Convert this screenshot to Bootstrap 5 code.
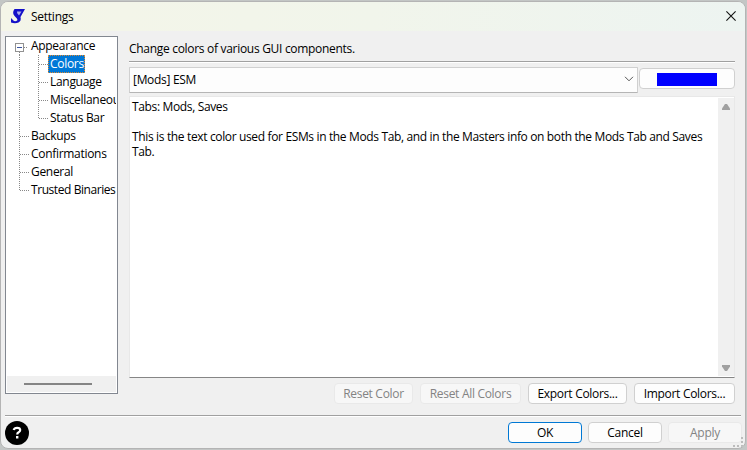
<!DOCTYPE html>
<html lang="en">
<head>
<meta charset="utf-8">
<title>Settings</title>
<link href="https://cdn.jsdelivr.net/npm/bootstrap@5.3.0/dist/css/bootstrap.min.css" rel="stylesheet">
<style>
body{width:747px;height:450px;overflow:hidden;background:#c3c6c5;font:12px/15px "Open Sans","Noto Sans",sans-serif;letter-spacing:-.3px;color:#000;padding:1px 1px 1px 0}
.dialog{height:448px;background:#f0f0f0;border:1px solid #b4b4b4;border-radius:8px;overflow:hidden;position:relative}
.titlebar{height:29px;padding:0 9px 1px 9px;background:linear-gradient(90deg,#f4f5e8,#f1f5eb 50%,#edf4f1)}
.titlebar .caption{margin-left:6px;letter-spacing:-.25px}
.upper{height:384px;padding:5px 10px 0 4px}
.tree{width:113px;height:358px;border:1px solid #828790;background:#fff;padding:0 1px 1px;overflow:hidden;flex:none}
.tree-rows{height:339px;overflow:hidden}
.node{height:18px;white-space:nowrap;line-height:18px}
.node svg{flex:none;shape-rendering:crispEdges}
.node span{padding:0 1px 0 2px}
.node .snug{letter-spacing:-.43px}
.node .picked{background:#0078d7;color:#fff;outline:1px dotted #e08a30;outline-offset:-1px}
.hbar{height:16px;background:#f0f0f0;padding:7px 0 0 17px}
.hbar div{width:68px;height:2px;background:#858585}
.main{margin-left:11px;width:606px}
.rule{height:2px;border-top:1px solid #a0a0a0;background:#fff}
.combo{width:509px;height:26px;background:#fdfdfd;border:1px solid #d0d0d0;border-bottom-color:#b5b5b5;padding:0 3px 2px;border-radius:1px}
.swatch{width:96px;height:23px;margin:1px 0 0 1px}
.swatch div{width:60px;height:13px;background:#00f;margin-top:1px}
.memo{height:282px;background:#fff;border:1px solid #e8e8e8;border-bottom:1px solid #868686;margin-top:3px}
.memo-text{padding:2px 0 0 2px;white-space:nowrap;letter-spacing:-.353px}
.vbar{width:16px;height:278px;margin:1px 0 0;background:#f0f0f0;padding:6px 0 5px}
.push{height:21px;padding:0;font-size:12px;line-height:17px;letter-spacing:inherit;background:#fdfdfd;border:1px solid #d0d0d0;border-radius:4px;color:#000;display:flex;align-items:center;justify-content:center}
.push:disabled{background:#f7f7f7;border-color:#e9e9e9;color:#838383;opacity:1}
.push.primary{border-color:#0078d4}
.footbar{padding:5px 3px 0 4px}
.w73{width:74px}.w79{width:79px}.w101{width:101px}.w99{width:99px}
.grip{position:absolute;right:1px;bottom:0}
</style>
</head>
<body>
<div class="dialog">
  <div class="titlebar d-flex align-items-center">
    <svg width="15" height="16" viewBox="0 0 15 16"><path d="M4.500 1H15L10.500 9q1 4-2 5.500Q5 16 1 14.500V10l3 3q3 .5 3.500-1Q7.500 10.500 5 8.500 1.500 5 4.500 1z" fill="#1410c8"/><path d="M7 3.500h4.500L9 7.500Q6.500 5 7 3.500z" fill="#aaaaec"/></svg>
    <span class="caption">Settings</span>
    <svg class="ms-auto" width="10" height="10" viewBox="0 0 10 10"><path d="M.4.4l9.200 9.200M9.600.4L.4 9.600" stroke="#111" stroke-width="1.1"/></svg>
  </div>
  <div class="upper d-flex">
    <div class="tree">
      <div class="tree-rows">
        <div class="node d-flex"><svg width="22" height="18"><path d="M12.500 15v3M17 10.500h4" stroke="#888" stroke-dasharray="1 1"/><rect x="8.500" y="6.500" width="8" height="8" rx="1" fill="#fff" stroke="#919191"/><path d="M10 10.500h5" stroke="#3c55a0"/></svg><span>Appearance</span></div>
        <div class="node d-flex"><svg width="41" height="18"><path d="M12.500 0v18M31.500 0v18M32 9.500h9" stroke="#888" stroke-dasharray="1 1"/></svg><span class="picked">Colors</span></div>
        <div class="node d-flex"><svg width="41" height="18"><path d="M12.500 0v18M31.500 0v18M32 9.500h9" stroke="#888" stroke-dasharray="1 1"/></svg><span>Language</span></div>
        <div class="node d-flex"><svg width="41" height="18"><path d="M12.500 0v18M31.500 0v18M32 9.500h9" stroke="#888" stroke-dasharray="1 1"/></svg><span>Miscellaneous</span></div>
        <div class="node d-flex"><svg width="41" height="18"><path d="M12.500 0v18M31.500 0v10M32 9.500h9" stroke="#888" stroke-dasharray="1 1"/></svg><span>Status Bar</span></div>
        <div class="node d-flex"><svg width="22" height="18"><path d="M12.500 0v18M13 9.500h9" stroke="#888" stroke-dasharray="1 1"/></svg><span>Backups</span></div>
        <div class="node d-flex"><svg width="22" height="18"><path d="M12.500 0v18M13 9.500h9" stroke="#888" stroke-dasharray="1 1"/></svg><span>Confirmations</span></div>
        <div class="node d-flex"><svg width="22" height="18"><path d="M12.500 0v18M13 9.500h9" stroke="#888" stroke-dasharray="1 1"/></svg><span>General</span></div>
        <div class="node d-flex"><svg width="22" height="18"><path d="M12.500 0v10M13 9.500h9" stroke="#888" stroke-dasharray="1 1"/></svg><span class="snug">Trusted Binaries</span></div>
      </div>
      <div class="hbar"><div></div></div>
    </div>
    <div class="main">
      <div class="d-flex align-items-center" style="height:25px"><span>Change colors of various GUI components.</span></div>
      <div class="rule"></div>
      <div class="d-flex" style="margin-top:4px">
        <div class="combo d-flex align-items-center justify-content-between"><span>[Mods] ESM</span><svg width="10" height="6" viewBox="0 0 10 6"><path d="M1 .8l4 4 4-4" fill="none" stroke="#555"/></svg></div>
        <button class="btn push swatch" aria-label="Pick color"><div></div></button>
      </div>
      <div class="memo d-flex justify-content-between">
        <div class="memo-text">Tabs: Mods, Saves<br><br>This is the text color used for ESMs in the Mods Tab, and in the Masters info on both the Mods Tab and Saves<br>Tab.</div>
        <div class="vbar d-flex flex-column align-items-center justify-content-between">
          <svg width="8" height="6"><path d="M3 0h2l3 4.500V6H0V4.500z" fill="#a0a0a0"/></svg>
          <svg width="8" height="6"><path d="M3 6h2l3-4.500V0H0v1.500z" fill="#a0a0a0"/></svg>
        </div>
      </div>
      <div class="d-flex justify-content-end" style="gap:7px;margin-top:5px">
        <button class="btn push w79" disabled>Reset Color</button>
        <button class="btn push w101" disabled>Reset All Colors</button>
        <button class="btn push w99">Export Colors...</button>
        <button class="btn push w101">Import Colors...</button>
      </div>
    </div>
  </div>
  <div class="rule" style="margin:0 4px"></div>
  <div class="footbar d-flex align-items-start">
    <svg style="margin-top:-1px" width="24" height="24" viewBox="0 0 24 24"><circle cx="12" cy="12" r="12"/><path d="M8.700 9q.6-2.200 3.400-2.200 3.100 0 3.100 2.300 0 1.400-1.500 2.100-1.500.8-1.500 2.200" fill="none" stroke="#fff" stroke-width="2.200"/><rect x="11" y="15" width="2.400" height="2.500" fill="#fff"/></svg>
    <div class="d-flex ms-auto" style="gap:6px">
      <button class="btn push primary w73">OK</button>
      <button class="btn push w73">Cancel</button>
      <button class="btn push w73" disabled>Apply</button>
    </div>
  </div>
  <svg class="grip" width="12" height="12"><path d="M9 1h2v2H9zM9 5h2v2H9zM1 9h2v2H1zM5 9h2v2H5zM9 9h2v2H9z" fill="#bcbcbc"/></svg>
</div>
<script src="https://cdn.jsdelivr.net/npm/bootstrap@5.3.0/dist/js/bootstrap.bundle.min.js"></script>
</body>
</html>
